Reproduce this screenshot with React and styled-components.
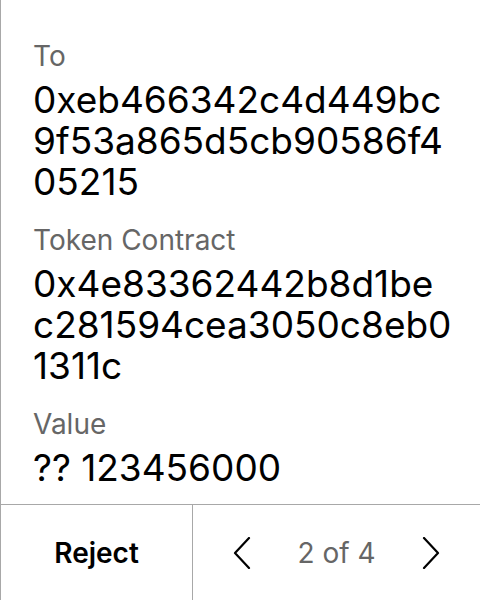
import React from "react";
import styled, { createGlobalStyle } from "styled-components";

const Global = createGlobalStyle`
  html, body { margin: 0; padding: 0; background: #fff; }
  body { font-family: Inter, "Noto Sans", sans-serif; }
`;

const Screen = styled.div`
  width: 480px;
  height: 600px;
  box-sizing: border-box;
  border-left: 1px solid #a8a8a8;
  display: flex;
  flex-direction: column;
  background: #fff;
  overflow: hidden;
`;

const Content = styled.div`
  flex: 1;
  min-height: 0;
  overflow: hidden;
  padding: 40px 10px 0 32px;
  display: flex;
  flex-direction: column;
  gap: 22px;
`;

const Field = styled.div`
  display: flex;
  flex-direction: column;
`;

const Label = styled.div`
  font-size: 28px;
  line-height: 33px;
  color: #666666;
  margin-bottom: 6px;
`;

const Value = styled.div`
  font-size: 37px;
  line-height: 41px;
  color: #000;
`;

const ValueLine = styled.span`
  display: block;
  white-space: nowrap;
`;

const Footer = styled.div`
  height: 96px;
  box-sizing: border-box;
  flex-shrink: 0;
  border-top: 1px solid #a8a8a8;
  display: grid;
  grid-template-columns: 192px 1fr;
`;

const RejectButton = styled.div`
  display: flex;
  align-items: center;
  justify-content: center;
  font-size: 28px;
  font-weight: 600;
  color: #000;
  border-right: 1px solid #a8a8a8;
`;

const Pager = styled.div`
  display: flex;
  align-items: center;
  justify-content: center;
  gap: 46px;
`;

const PageText = styled.span`
  font-size: 28px;
  color: #666666;
`;

const Chevron = ({ dir }) => (
  <svg width="18" height="32" viewBox="0 0 18 32" fill="none">
    <polyline
      points={dir === "left" ? "16,1 2,16 16,31" : "2,1 16,16 2,31"}
      stroke="#000"
      strokeWidth="2.2"
      strokeLinecap="round"
      strokeLinejoin="round"
    />
  </svg>
);

const fields = [
  { label: "To", lines: ["0xeb466342c4d449bc", "9f53a865d5cb90586f4", "05215"] },
  { label: "Token Contract", lines: ["0x4e83362442b8d1be", "c281594cea3050c8eb0", "1311c"] },
  { label: "Value", lines: ["?? 123456000"] },
];

export default function App() {
  return (
    <>
      <Global />
      <Screen>
        <Content>
          {fields.map((f) => (
            <Field key={f.label}>
              <Label>{f.label}</Label>
              <Value>
                {f.lines.map((line, i) => (
                  <ValueLine key={i}>{line}</ValueLine>
                ))}
              </Value>
            </Field>
          ))}
        </Content>
        <Footer>
          <RejectButton>Reject</RejectButton>
          <Pager>
            <Chevron dir="left" />
            <PageText>2 of 4</PageText>
            <Chevron dir="right" />
          </Pager>
        </Footer>
      </Screen>
    </>
  );
}
